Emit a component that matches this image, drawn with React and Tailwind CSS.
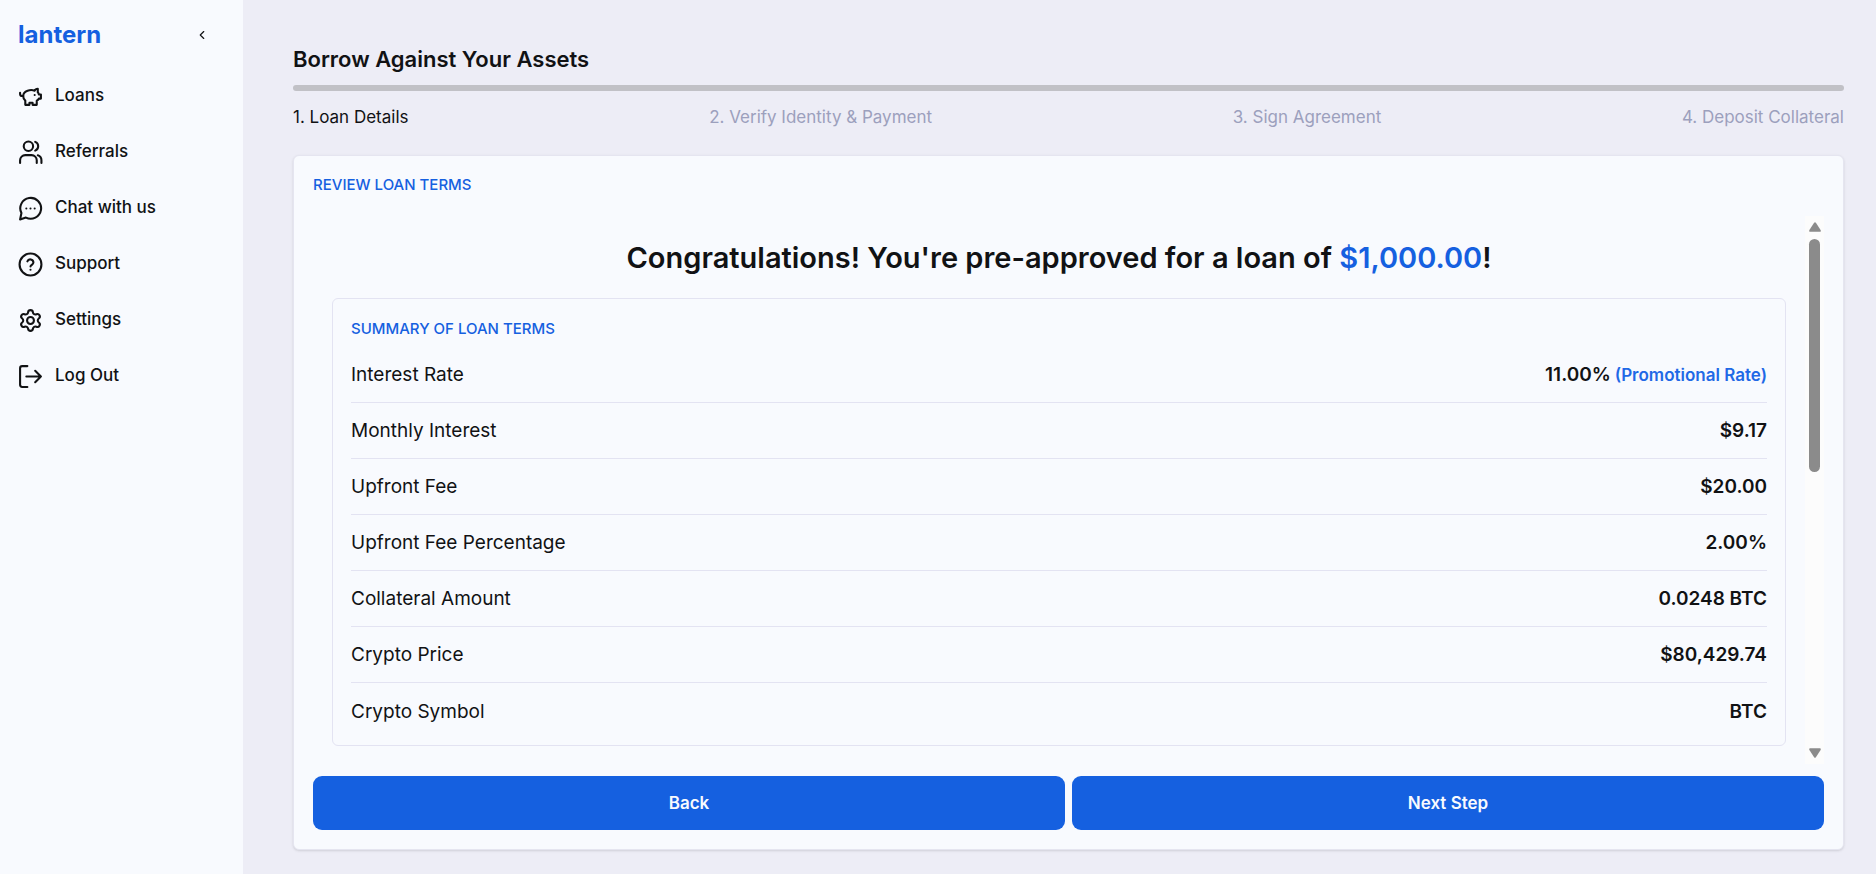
import React from "react";
import { ChevronLeft } from "lucide-react";

const navItems = [
  {
    label: "Loans",
    icon: (
      <>
        <path d="M19 4.500c-1.500 0-2.800 1.400-3 2-3.500-1.500-11-.3-11 5 0 1.800 0 3 2 4.500V20h4v-2h3v2h4v-4c1-.5 1.700-1 2-2h2v-4h-2c0-1-.5-1.500-1-2V4.500z" />
        <path d="M2 8.500v1c0 1.100.9 2 2 2h1" />
        <path d="M16 10.500h.01" />
      </>
    ),
  },
  {
    label: "Referrals",
    icon: (
      <>
        <circle cx="10" cy="6" r="4.5" />
        <path d="M2 22v-2.500a5 5 0 0 1 5-5h6a5 5 0 0 1 5 5V22" />
        <path d="M16.500 1.800a4.500 4.500 0 0 1 0 8.400" />
        <path d="M19 14.700a5 5 0 0 1 3.500 4.800V22" />
      </>
    ),
  },
  {
    label: "Chat with us",
    icon: (
      <>
        <path d="M2 22.500l1.300-6.100A10 10 0 1 1 7.600 20.700z" />
        <path d="M8 12h.01M12 12h.01M16 12h.01" />
      </>
    ),
  },
  {
    label: "Support",
    icon: (
      <>
        <circle cx="12" cy="12" r="10.5" />
        <path d="M9 9a3 3 0 0 1 5.800 1c0 2-2.800 2.500-2.800 4" />
        <path d="M12 17h.01" />
      </>
    ),
  },
  {
    label: "Settings",
    icon: (
      <>
        <path d="M9.671 4.136a2.34 2.34 0 0 1 4.659 0 2.34 2.34 0 0 0 3.319 1.915 2.34 2.34 0 0 1 2.33 4.033 2.34 2.34 0 0 0 0 3.831 2.34 2.34 0 0 1-2.33 4.033 2.34 2.34 0 0 0-3.319 1.915 2.34 2.34 0 0 1-4.659 0 2.34 2.34 0 0 0-3.32-1.915 2.34 2.34 0 0 1-2.33-4.033 2.34 2.34 0 0 0 0-3.831A2.34 2.34 0 0 1 6.35 6.051a2.34 2.34 0 0 0 3.319-1.915" />
        <circle cx="12" cy="12" r="3.3" />
      </>
    ),
  },
  {
    label: "Log Out",
    icon: (
      <>
        <path d="M9 2H4a2 2 0 0 0-2 2v16a2 2 0 0 0 2 2h5" />
        <path d="M8 12h14M16.500 6.500L22 12l-5.500 5.500" />
      </>
    ),
  },
];

const steps = ["1. Loan Details", "2. Verify Identity & Payment", "3. Sign Agreement", "4. Deposit Collateral"];

const terms = [
  { label: "Interest Rate", value: "11.00%", note: "(Promotional Rate)" },
  { label: "Monthly Interest", value: "$9.17" },
  { label: "Upfront Fee", value: "$20.00" },
  { label: "Upfront Fee Percentage", value: "2.00%" },
  { label: "Collateral Amount", value: "0.0248 BTC" },
  { label: "Crypto Price", value: "$80,429.74" },
  { label: "Crypto Symbol", value: "BTC" },
];

const Sidebar = () => (
  <aside className="w-[243px] shrink-0 bg-[#f8fafe] px-[18px] pt-[17px]">
    <div className="flex h-9 items-center justify-between pr-4">
      <a href="#" className="text-2xl font-bold text-[#1560e0]">lantern</a>
      <button type="button" aria-label="Collapse sidebar">
        <ChevronLeft size={14} />
      </button>
    </div>
    <nav className="mt-[15px] flex flex-col">
      {navItems.map((item) => (
        <a key={item.label} href="#" className="flex h-14 items-center gap-3 text-[17px] font-medium">
          <svg
            viewBox="0 0 24 24"
            className="size-[25px]"
            fill="none"
            stroke="currentColor"
            strokeWidth="2"
            strokeLinecap="round"
            strokeLinejoin="round"
          >
            {item.icon}
          </svg>
          {item.label}
        </a>
      ))}
    </nav>
  </aside>
);

const ScrollRail = () => (
  <div className="flex w-[19px] shrink-0 flex-col items-center bg-[#fcfcfc] py-[6px]">
    <svg viewBox="0 0 12 10" className="h-[10px] w-3" fill="#8b8b8b">
      <path d="M5.1.8Q6-.4 6.900.8L11.600 8Q12.300 9.800 10.800 9.800H1.200Q-.3 9.800.4 8z" />
    </svg>
    <div className="mt-[7px] h-[233px] w-[11px] rounded-full bg-[#8b8b8b]" />
    <svg viewBox="0 0 12 10" className="mt-auto h-[10px] w-3 rotate-180" fill="#8b8b8b">
      <path d="M5.1.8Q6-.4 6.900.8L11.600 8Q12.300 9.800 10.800 9.800H1.200Q-.3 9.800.4 8z" />
    </svg>
  </div>
);

const App = () => {
  return (
    <div className="flex min-h-screen bg-[#ededf6] font-['Inter',sans-serif] text-[#111214]">
      <Sidebar />
      <main className="flex min-w-0 flex-1 flex-col pt-[43px] pr-8 pb-6 pl-[50px]">
        <h1 className="text-[22px] leading-8 font-semibold">Borrow Against Your Assets</h1>
        <div className="mt-[10px] h-[6px] rounded-full bg-[#c1c1c6]" />
        <ol className="mt-[14px] flex justify-between text-[17px] leading-6">
          {steps.map((step, i) => (
            <li key={step} className={i === 0 ? "" : "text-[#9ca0bd]"}>{step}</li>
          ))}
        </ol>

        <section className="mt-[26px] flex flex-1 flex-col rounded-md border border-[#e5e5f0] bg-[#f8fafe] p-[19px] shadow-sm">
          <h2 className="text-[15px] leading-5 font-medium text-[#1560e0]">REVIEW LOAN TERMS</h2>

          <div className="mt-[21px] flex">
            <div className="min-w-0 flex-1 px-[19px] pt-5 pb-[18px]">
              <p className="text-center text-[29px] leading-[44px] font-semibold">
                Congratulations! You're pre-approved for a loan of <span className="text-[#1560e0]">$1,000.00</span>!
              </p>
              <div className="mt-[18px] rounded-md border border-[#e3e3f2] px-[18px] pt-5 pb-[6px]">
                <h3 className="text-[15px] leading-5 font-medium text-[#1560e0]">SUMMARY OF LOAN TERMS</h3>
                <dl className="mt-2">
                  {terms.map((term) => (
                    <div
                      key={term.label}
                      className="flex h-14 items-center justify-between border-b border-[#e3e3f2] pt-0.5 text-[19px] last:border-b-0"
                    >
                      <dt>{term.label}</dt>
                      <dd className="font-semibold">
                        {term.value}
                        {term.note && <span className="ml-1 text-[17px] text-[#1f69e6]">{term.note}</span>}
                      </dd>
                    </div>
                  ))}
                </dl>
              </div>
            </div>
            <ScrollRail />
          </div>

          <div className="mt-3 grid grid-cols-2 gap-[7px] text-[17px] font-semibold text-[#f8fafe]">
            <button type="button" className="h-[54px] rounded-[9px] bg-[#1560e0] pt-0.5">Back</button>
            <button type="button" className="h-[54px] rounded-[9px] bg-[#1560e0] pt-0.5">Next Step</button>
          </div>
        </section>
      </main>
    </div>
  );
};

export default App;
